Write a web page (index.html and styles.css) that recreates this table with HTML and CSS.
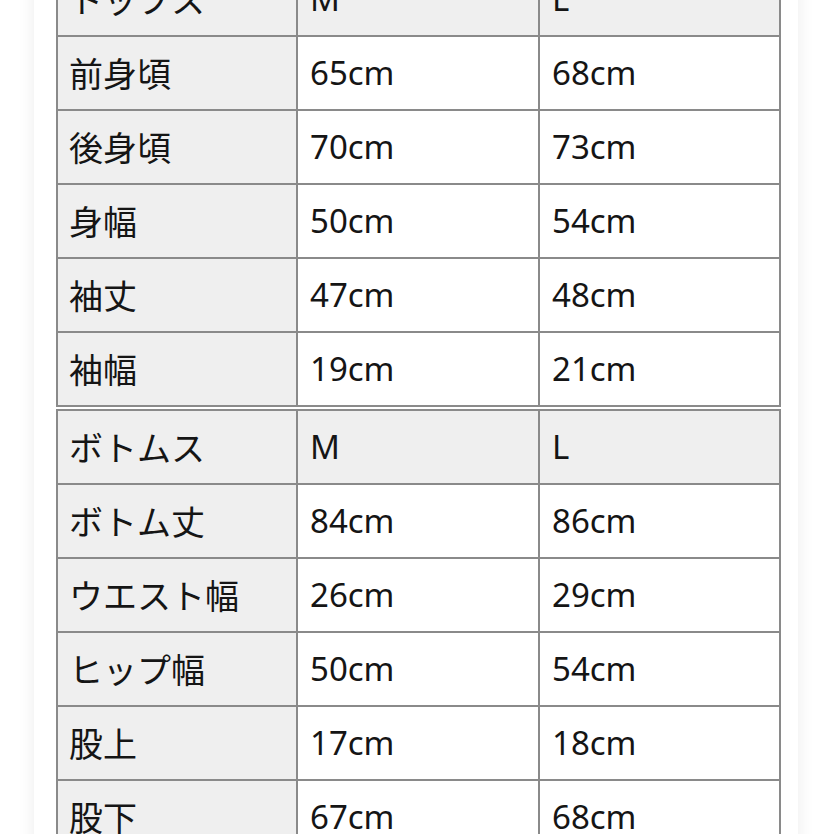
FILE: index.html
```html
<!DOCTYPE html>
<html lang="ja">
<head>
<meta charset="utf-8">
<title>サイズ表</title>
<link rel="stylesheet" href="styles.css">
</head>
<body>
<div class="page">
  <table class="size-table tops">
    <colgroup><col class="c1"><col class="c2"><col class="c3"></colgroup>
    <tr class="head"><th>トップス</th><th>M</th><th>L</th></tr>
    <tr><th>前身頃</th><td>65cm</td><td>68cm</td></tr>
    <tr><th>後身頃</th><td>70cm</td><td>73cm</td></tr>
    <tr><th>身幅</th><td>50cm</td><td>54cm</td></tr>
    <tr><th>袖丈</th><td>47cm</td><td>48cm</td></tr>
    <tr><th>袖幅</th><td>19cm</td><td>21cm</td></tr>
  </table>
  <table class="size-table bottoms">
    <colgroup><col class="c1"><col class="c2"><col class="c3"></colgroup>
    <tr class="head"><th>ボトムス</th><th>M</th><th>L</th></tr>
    <tr><th>ボトム丈</th><td>84cm</td><td>86cm</td></tr>
    <tr><th>ウエスト幅</th><td>26cm</td><td>29cm</td></tr>
    <tr><th>ヒップ幅</th><td>50cm</td><td>54cm</td></tr>
    <tr><th>股上</th><td>17cm</td><td>18cm</td></tr>
    <tr><th>股下</th><td>67cm</td><td>68cm</td></tr>
  </table>
</div>
</body>
</html>
```

FILE: styles.css
```css
html, body {
  margin: 0;
  padding: 0;
  background: #ffffff;
  overflow: hidden;
  height: 834px;
}

.page {
  margin-left: 34px;
  width: 764px;
  height: 900px;
  background: #ffffff;
  box-shadow: 0 0 16px rgba(0, 0, 0, 0.08);
  padding-left: 22px;
  box-sizing: border-box;
}

.size-table {
  border-collapse: collapse;
  width: 723px;
  table-layout: fixed;
  font-family: "Noto Sans", "Noto Sans CJK JP", sans-serif;
  font-size: 33px;
  color: #151515;
}

.tops {
  margin-top: -39px;
}

.bottoms {
  margin-top: 2px;
}

.c1 { width: 240px; }
.c2 { width: 242px; }
.c3 { width: 241px; }

.size-table th,
.size-table td {
  border: 2px solid #8a8a8a;
  height: 72px;
  line-height: 72px;
  padding: 0 0 0 12px;
  text-align: left;
  font-weight: normal;
  white-space: nowrap;
  overflow: hidden;
  vertical-align: middle;
}

.size-table th {
  background: #efefef;
  padding-left: 11px;
  font-family: "Noto Sans CJK JP", "Noto Sans", sans-serif;
  font-size: 34px;
}

.size-table td {
  background: #ffffff;
}

.size-table .head th {
  background: #efefef;
}

.size-table .head th + th {
  font-family: "Noto Sans", "Noto Sans CJK JP", sans-serif;
  font-size: 33px;
  padding-left: 12px;
}
```
